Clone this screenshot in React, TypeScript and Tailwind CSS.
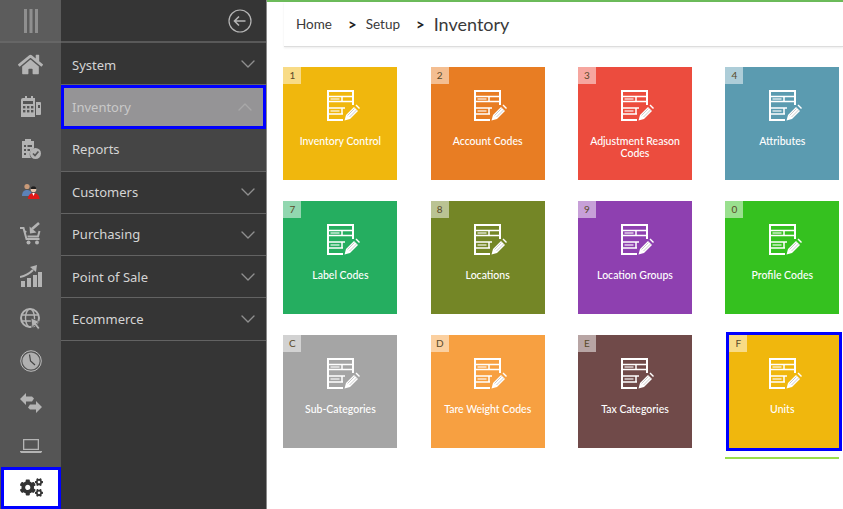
import React from 'react';
import { ChevronDown, ChevronUp } from 'lucide-react';
import { FaHome, FaCogs } from 'react-icons/fa';

const railIconColor = '#b4b4b4';

const BarsIcon = () => (
    <svg width="14" height="24" viewBox="0 0 14 24" fill="#8f8f8f">
        <rect x="0" y="0" width="3" height="24" />
        <rect x="5.5" y="0" width="3" height="24" />
        <rect x="11" y="0" width="3" height="24" />
    </svg>
);

const CalculatorIcon = () => (
    <svg width="22" height="21" viewBox="0 0 22 21" fill={railIconColor}>
        <path d="M3 2h2V0h2v2h4V0h2v2h2v19H1V4a2 2 0 0 1 2-2z" />
        <rect x="3" y="5" width="10" height="3" fill="#555" />
        <g fill="#555">
            <rect x="3" y="10" width="2.4" height="2.4" />
            <rect x="7" y="10" width="2.4" height="2.4" />
            <rect x="11" y="10" width="2.4" height="2.4" />
            <rect x="3" y="14" width="2.4" height="2.4" />
            <rect x="7" y="14" width="2.4" height="2.4" />
            <rect x="11" y="14" width="2.4" height="2.4" />
        </g>
        <path d="M16 6h4a1 1 0 0 1 1 1v11a1 1 0 0 1-1 1h-4z" />
        <rect x="18" y="9" width="2" height="3" fill="#555" />
    </svg>
);

const ClipboardIcon = () => (
    <svg width="20" height="22" viewBox="0 0 20 22">
        <path d="M1 3h3V1h6v2h3v7.5a6 6 0 0 0-3 9.5H1z" fill={railIconColor} />
        <g fill="#555">
            <rect x="3" y="7" width="2" height="2" />
            <rect x="6.5" y="7" width="4.5" height="2" />
            <rect x="3" y="11" width="2" height="2" />
            <rect x="6.5" y="11" width="2.5" height="2" />
            <rect x="3" y="15" width="2" height="2" />
        </g>
        <circle cx="14.5" cy="15.5" r="5.5" fill={railIconColor} />
        <path d="M12 15.5l2 2 3.4-4" fill="none" stroke="#555" strokeWidth="1.7" />
    </svg>
);

const CustomersIcon = () => (
    <svg width="18" height="17" viewBox="0 0 18 17">
        <circle cx="5" cy="3.5" r="2.6" fill="#c99a78" />
        <path d="M0 13c0-4 2-6 5-6s5 2 5 6z" fill="#5b82b8" />
        <circle cx="11.5" cy="6.5" r="2.8" fill="#e9c6ae" />
        <path d="M8.7 6a2.8 2.8 0 0 1 5.6 0z" fill="#1d1d1d" />
        <path d="M6 16c0-4 2.5-6 5.5-6s6 2 6 6z" fill="#e01818" />
        <path d="M10.2 10h2.6l-1.3 3z" fill="#fff" />
    </svg>
);

const CartIcon = () => (
    <svg width="22" height="23" viewBox="0 0 22 23" fill="none" stroke={railIconColor}>
        <path d="M0 6h3.5l3 11h13" strokeWidth="2" />
        <path d="M5 9l1 1.5M19.5 9L18 14.5H7.5" strokeWidth="2" />
        <path d="M19 1l-7 6" strokeWidth="2.6" />
        <path d="M9.5 4.5l.5 7 6.5-1z" fill={railIconColor} stroke="none" />
        <circle cx="8.5" cy="20.5" r="2" fill={railIconColor} stroke="none" />
        <circle cx="17" cy="20.5" r="2" fill={railIconColor} stroke="none" />
    </svg>
);

const ChartIcon = () => (
    <svg width="22" height="22" viewBox="0 0 22 22" fill={railIconColor}>
        <rect x="1" y="16" width="4" height="6" />
        <rect x="7" y="13" width="4" height="9" />
        <rect x="13" y="10" width="4" height="12" />
        <rect x="18" y="7" width="4" height="15" />
        <path d="M0 12c5-1 9-3 13-7" fill="none" stroke={railIconColor} strokeWidth="2" />
        <path d="M10 2l7-2-1 7z" />
    </svg>
);

const GlobeCursorIcon = () => (
    <svg width="22" height="22" viewBox="0 0 22 22" fill="none" stroke={railIconColor} strokeWidth="1.4">
        <circle cx="10" cy="10" r="9" strokeWidth="2" />
        <ellipse cx="10" cy="10" rx="4.5" ry="9" />
        <path d="M1 7h18M1 13h18" />
        <path d="M11 10l9 4-3.5 1.5 3.5 4.5-2 1.5-3.5-4.5L12 20z" fill={railIconColor} stroke="#555" strokeWidth="0.8" />
    </svg>
);

const ClockIcon = () => (
    <svg width="22" height="22" viewBox="0 0 22 22">
        <circle cx="11" cy="11" r="10.3" fill="none" stroke="#bdbdbd" strokeWidth="1" />
        <circle cx="11" cy="11" r="8.6" fill="#b0b0b0" />
        <path d="M9.5 4.5l1 6.5 4.5 4" fill="none" stroke="#444" strokeWidth="1.2" />
    </svg>
);

const SwapIcon = () => (
    <svg width="22" height="20" viewBox="0 0 22 20" fill={railIconColor}>
        <path d="M0 6l6-6v3.5h6l2 2-2 3H6V12z" />
        <path d="M22 14l-6 6v-3.5h-6l-2-2 2-3h6V8z" />
    </svg>
);

const LaptopIcon = () => (
    <svg width="22" height="14" viewBox="0 0 22 14" fill={railIconColor}>
        <path d="M3 0h16v11H3zm1.3 1.3v8.4h13.4V1.3z" fillRule="evenodd" />
        <path d="M0 12h22v.8l-1 1.2H1l-1-1.2z" />
    </svg>
);

const FormIcon = () => (
    <svg width="33" height="33" viewBox="0 0 33 33" fill="none" stroke="#fff">
        <path d="M26 15V1H1v29h15" strokeWidth="2" />
        <path d="M1 6.5h25M1 11.5h25M1 18h17M1 24h15M15 6.5v5M15 18v6" strokeWidth="1.5" />
        <path d="M3.5 9h9M3.5 21h9" strokeWidth="1.4" opacity="0.75" />
        <path d="M19 25l8-8 4 4-8 8-5.5 1.5z" fill="#fff" stroke="none" />
        <path d="M28.5 15.5l1-1 3.5 3.5-1 1z" fill="#fff" stroke="none" />
        <path d="M20.5 25.5l7-7M22.5 27l7-7" stroke="#000" strokeOpacity="0.3" strokeWidth="0.7" />
    </svg>
);

const menuItems = [
    { label: 'System', chevron: 'down', first: true },
    { label: 'Inventory', chevron: 'up', active: true },
    { label: 'Reports', sub: true },
    { label: 'Customers', chevron: 'down' },
    { label: 'Purchasing', chevron: 'down' },
    { label: 'Point of Sale', chevron: 'down' },
    { label: 'Ecommerce', chevron: 'down' }
];

const tiles = [
    { key: '1', label: 'Inventory Control', color: 'bg-[#f0b70d]' },
    { key: '2', label: 'Account Codes', color: 'bg-[#e87d23]' },
    { key: '3', label: 'Adjustment Reason Codes', color: 'bg-[#ec4c3e]' },
    { key: '4', label: 'Attributes', color: 'bg-[#5b9bb0]' },
    { key: '7', label: 'Label Codes', color: 'bg-[#25ae60]' },
    { key: '8', label: 'Locations', color: 'bg-[#748626]' },
    { key: '9', label: 'Location Groups', color: 'bg-[#8e40b0]' },
    { key: '0', label: 'Profile Codes', color: 'bg-[#35c11f]' },
    { key: 'C', label: 'Sub-Categories', color: 'bg-[#a5a5a5]' },
    { key: 'D', label: 'Tare Weight Codes', color: 'bg-[#f7a041]' },
    { key: 'E', label: 'Tax Categories', color: 'bg-[#704a49]' },
    { key: 'F', label: 'Units', color: 'bg-[#f0b70d]', selected: true }
];

const railIcons = [
    <FaHome size={25} color={railIconColor} />,
    <CalculatorIcon />,
    <ClipboardIcon />,
    <CustomersIcon />,
    <CartIcon />,
    <ChartIcon />,
    <GlobeCursorIcon />,
    <ClockIcon />,
    <SwapIcon />,
    <LaptopIcon />
];

const App: React.FC = () => {
    return (
        <div className="flex h-[509px] w-[843px] overflow-hidden bg-white font-['Lato',sans-serif]">
            <div className="flex w-[61px] shrink-0 flex-col bg-[#555555]">
                <div className="flex h-[43px] shrink-0 items-center justify-center border-b-2 border-[#666666] bg-[#5c5c5c]">
                    <BarsIcon />
                </div>
                {railIcons.map((icon, i) => (
                    <div key={i} className="flex h-[42.4px] shrink-0 items-center justify-center">
                        {icon}
                    </div>
                ))}
                <div className="ml-px flex h-[42px] shrink-0 items-center justify-center border-[3px] border-[#0000ff] bg-white">
                    <FaCogs size={23} color="#333333" />
                </div>
            </div>

            <div className="flex w-[206px] shrink-0 flex-col border-r border-[#8a8a8a] bg-[#353535] font-['Noto_Sans',sans-serif]">
                <div className="flex h-[43px] shrink-0 items-center justify-end border-b-2 border-[#595959] pr-[14px]">
                    <svg width="24" height="24" viewBox="0 0 24 24" fill="none" stroke="#b5b5b5" strokeWidth="1.2">
                        <circle cx="12" cy="12" r="11" />
                        <path d="M6.5 12h11M11 7.5L6.5 12l4.5 4.5" strokeWidth="1.6" />
                    </svg>
                </div>
                {menuItems.map((item) =>
                    item.active ? (
                        <div
                            key={item.label}
                            className="flex h-[44px] shrink-0 items-center justify-between border-[3px] border-[#0000ff] bg-[#959496] pl-[8px] pr-[6px] text-[13px] text-[#c9c9c9]"
                        >
                            <span>{item.label}</span>
                            <ChevronUp size={24} strokeWidth={1.4} color="#a8a8a8" />
                        </div>
                    ) : (
                        <div
                            key={item.label}
                            className={`flex h-[42.3px] shrink-0 items-center justify-between border-b border-[#636363] pl-[11px] pr-[6px] text-[13px] text-[#d4d4d4] ${item.sub ? 'bg-[#454545]' : ''}`}
                        >
                            <span className={item.first ? 'pt-[4px]' : item.sub ? '' : 'pt-px'}>{item.label}</span>
                            {item.chevron && <ChevronDown size={24} strokeWidth={1.4} color="#8f8f8f" />}
                        </div>
                    )
                )}
            </div>

            <div className="flex min-w-0 flex-1 flex-col">
                <div className="h-[2px] shrink-0 bg-[#6cbb5a]" />
                <div className="ml-[17px] flex h-[45px] shrink-0 items-center border-b border-[#dddddd] pl-[12px] text-[13.5px] text-[#3a3a3a] shadow-[0_1px_2px_rgba(0,0,0,0.08)]">
                    <span>Home</span>
                    <span className="ml-[16px] text-[15px] font-bold leading-none text-[#222222]">&gt;</span>
                    <span className="ml-[9px]">Setup</span>
                    <span className="ml-[16px] text-[15px] font-bold leading-none text-[#222222]">&gt;</span>
                    <span className="ml-[9px] text-[18px]">Inventory</span>
                </div>
                <div className="ml-[16.4px] mt-[20px] grid w-[556px] grid-cols-[114px_114px_114px_114px] gap-x-[33.3px] gap-y-[21px]">
                    {tiles.map((tile) => (
                        <div key={tile.key} className={tile.selected ? 'relative pl-[4px]' : ''}>
                            <div
                                className={`relative flex h-[113px] flex-col items-center pt-[23px] text-white ${tile.color} ${tile.selected ? 'pr-[4px] outline-[3px] outline-[#0000ff]' : ''}`}
                            >
                                <span className="absolute left-0 top-0 flex h-[17px] w-[18px] items-center justify-center bg-white/50 text-[10px] text-[#5a4a2a]">
                                    {tile.key}
                                </span>
                                <div className="pl-[6px]">
                                    <FormIcon />
                                </div>
                                <div className="mt-[12px] px-[6px] text-center text-[10.5px] font-medium leading-[12px]">
                                    {tile.label}
                                </div>
                            </div>
                            {tile.selected && <div className="absolute left-0 top-[122px] h-[2px] w-full bg-[#9ade4b]" />}
                        </div>
                    ))}
                </div>
            </div>
        </div>
    );
};

export default App;
